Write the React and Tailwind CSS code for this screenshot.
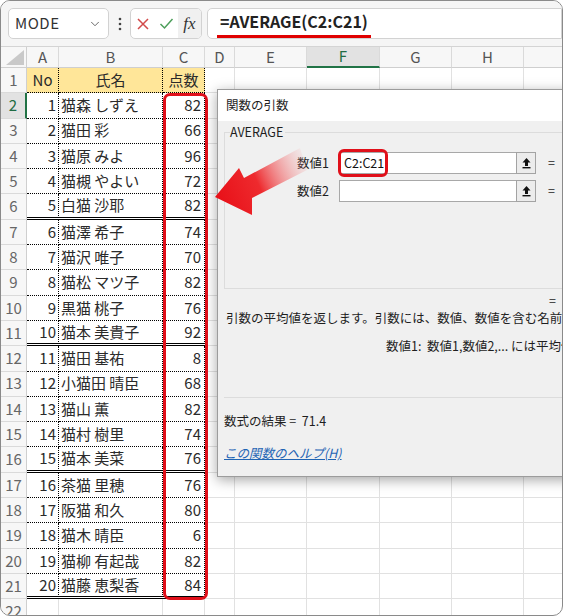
import { ChevronDown } from "lucide-react";

const ROWS = [
  [1, "猫森 しずえ", 82],
  [2, "猫田 彩", 66],
  [3, "猫原 みよ", 96],
  [4, "猫槻 やよい", 72],
  [5, "白猫 沙耶", 82],
  [6, "猫澤 希子", 74],
  [7, "猫沢 唯子", 70],
  [8, "猫松 マツ子", 82],
  [9, "黒猫 桃子", 76],
  [10, "猫本 美貴子", 92],
  [11, "猫田 基祐", 8],
  [12, "小猫田 晴臣", 68],
  [13, "猫山 薫", 82],
  [14, "猫村 樹里", 74],
  [15, "猫本 美菜", 76],
  [16, "茶猫 里穂", 76],
  [17, "阪猫 和久", 80],
  [18, "猫木 晴臣", 6],
  [19, "猫柳 有起哉", 82],
  [20, "猫藤 恵梨香", 84],
];

// widths of D..I
const EMPTY_COLS = [30, 72, 73, 72, 72, 80];
const HEADERS = [
  ["A", 32],
  ["B", 104],
  ["C", 42],
  ["D", 30],
  ["E", 72],
  ["F", 73],
  ["G", 72],
  ["H", 72],
  ["I", 80],
];

function EmptyCells() {
  return EMPTY_COLS.map((w, i) => (
    <div
      key={i}
      className="h-full flex-none border-r border-b border-[#e1e1e1]"
      style={{ width: w }}
    />
  ));
}

function RowHeader({ n, active }) {
  return (
    <div
      className={
        "h-full w-[26px] flex-none flex items-center justify-center text-[15px] border-b border-[#dadada] " +
        (active
          ? "bg-[#e2e2e2] text-[#1f6b43] border-r-2 border-r-[#217346]"
          : "bg-[#f7f7f7] text-[#666] border-r border-r-[#cfcfcf]")
      }
    >
      {n}
    </div>
  );
}

function DataRow({ n, no, name, score, head, double }) {
  const bottom = double
    ? "border-b-[3px] [border-bottom-style:double]"
    : "border-b [border-bottom-style:dotted]";
  const cell = `h-full flex-none flex items-center border-r [border-right-style:dotted] border-black ${bottom} ${
    head ? "bg-[#ffe699]" : ""
  }`;
  return (
    <div className="flex h-[25.3px]">
      <RowHeader n={n} active={n === 2} />
      <div className={`${cell} w-[32px] ${head ? "justify-center" : "justify-end pr-[2px]"}`}>{no}</div>
      <div className={`${cell} w-[104px] ${head ? "justify-center" : "pl-[2px]"} whitespace-nowrap`}>{name}</div>
      <div className={`${cell} w-[42px] ${head ? "justify-center" : "justify-end pr-[3px]"}`}>{score}</div>
      <EmptyCells />
    </div>
  );
}

function RefButton() {
  return (
    <div className="w-[20px] h-full flex-none bg-[#ececec] border border-[#a3a3a3] flex items-center justify-center">
      <svg width="11" height="12" viewBox="0 0 11 12">
        <path d="M5.5 1 L9.5 5.5 H7 V9 H4 V5.5 H1.5 Z" fill="#111" />
        <rect x="1.5" y="10" width="8" height="1.4" fill="#111" />
      </svg>
    </div>
  );
}

function ArgRow({ label, value, mt }) {
  return (
    <div className={`flex items-center h-[22px] ${mt}`}>
      <div className="w-[104px] text-right">{label}</div>
      <div className="ml-[10px] w-[177px] h-full bg-white border border-[#a8a8a8] border-r-0 flex items-center pl-[4px] text-[12.5px] text-[#111]">
        {value && (
          <span className="relative">
            {value}
            <span className="absolute -left-[6px] -right-[4px] -top-[5px] -bottom-[5px] border-[3px] border-[#e0101a] rounded-[6px]" />
          </span>
        )}
      </div>
      <RefButton />
      <div className="ml-[12px]">=</div>
    </div>
  );
}

function Dialog() {
  return (
    <div className="absolute left-[216px] top-[88px] w-[360px] h-[388px] flex flex-col border border-[#9c9c9c] bg-[#f0f0f0] shadow-[0_3px_12px_rgba(0,0,0,0.35)] text-[12.5px] text-[#1e1e1e]">
      <div className="h-[31px] flex-none bg-white flex items-center pl-[8px]">関数の引数</div>
      <div className="flex-1 px-[6px] pt-[11px]">
        <div className="relative h-[157px] border border-[#dcdcdc]">
          <div className="absolute left-[5px] -top-[8px] leading-[14px] bg-[#f0f0f0] pr-[2px]">AVERAGE</div>
          <ArgRow label="数値1" value="C2:C21" mt="mt-[19px]" />
          <ArgRow label="数値2" mt="mt-[6px]" />
        </div>
        <div className="mt-[6px] h-[12px] leading-[12px] pl-[325px]">=</div>
        <div className="mt-[4px] h-[14px] leading-[14px] pl-[2px] whitespace-nowrap">
          引数の平均値を返します。引数には、数値、数値を含む名前、配列、セル参照を指定できます。
        </div>
        <div className="mt-[14px] h-[14px] leading-[14px] pl-[162px] whitespace-pre">
          数値1:  数値1,数値2,... には平均値を求めたい数値を指定します。
        </div>
        <div className="mt-[44px] border-t border-[#dcdcdc]" />
        <div className="mt-[17px] h-[12px] leading-[12px] whitespace-pre">数式の結果 =  71.4</div>
        <div className="mt-[20px] h-[14px] leading-[12px]">
          <span className="text-[#1f64b4] underline italic">この関数のヘルプ(H)</span>
        </div>
      </div>
    </div>
  );
}

function Arrow() {
  return (
    <svg
      className="absolute left-0 top-0 pointer-events-none"
      width="563"
      height="616"
      viewBox="0 0 563 616"
    >
      <defs>
        <linearGradient id="arrowFade" x1="215" y1="196" x2="304" y2="156" gradientUnits="userSpaceOnUse">
          <stop offset="0" stopColor="#e81018" />
          <stop offset="0.45" stopColor="#ee2a2e" />
          <stop offset="1" stopColor="#f4a0a0" stopOpacity="0.1" />
        </linearGradient>
      </defs>
      <polygon
        points="214,196 238,167 243,177 299,147 306,169 251,197 251,214"
        fill="url(#arrowFade)"
      />
    </svg>
  );
}

export default function App() {
  return (
    <div className="relative w-[563px] h-[616px] overflow-hidden bg-white rounded-[10px] border border-[#8a8a8a] font-['Noto_Sans_CJK_JP',sans-serif] text-[#333]">
      {/* formula bar */}
      <div className="h-[46px] flex items-center bg-[#f5f5f5] border-b border-[#d4d4d4]">
        <div className="ml-[7px] w-[101px] h-[31px] bg-white border border-[#d2d2d2] rounded-[5px] flex items-center pl-[6px] pr-[6px] text-[15px] text-[#333]">
          <span className="flex-1 tracking-[0.5px]">MODE</span>
          <ChevronDown size={14} strokeWidth={1.5} color="#555" />
        </div>
        <svg className="ml-[9px]" width="4" height="14" viewBox="0 0 4 14">
          <circle cx="2" cy="2" r="1.3" fill="#444" />
          <circle cx="2" cy="7" r="1.3" fill="#444" />
          <circle cx="2" cy="12" r="1.3" fill="#444" />
        </svg>
        <div className="ml-[8px] w-[72px] h-[31px] bg-white border border-[#d2d2d2] rounded-[5px] flex items-center overflow-hidden">
          <svg className="ml-[5px]" width="14" height="14" viewBox="0 0 14 14">
            <path d="M2 2 L12 12 M12 2 L2 12" stroke="#d24b4b" strokeWidth="1.5" fill="none" />
          </svg>
          <svg className="ml-[9px]" width="15" height="13" viewBox="0 0 15 13">
            <path d="M1.5 7 L5.5 11 L13.5 2" stroke="#4c9e5a" strokeWidth="1.5" fill="none" />
          </svg>
          <div className="ml-[4px] h-full flex-1 bg-[#f0f0f0] flex items-center justify-center font-['Liberation_Serif',serif] italic text-[17px] text-[#333]">
            fx
          </div>
        </div>
        <div className="ml-[5px] flex-1 h-[31px] bg-white border border-[#d2d2d2] rounded-l-[5px] pl-[9px]">
          <span className="inline-block mt-[2px] px-[3px] leading-[20px] pb-[4px] border-b-[3px] border-[#e00000] text-[16px] font-semibold text-[#222]">
            =AVERAGE(C2:C21)
          </span>
        </div>
      </div>

      {/* column headers */}
      <div className="flex h-[21px] bg-[#f7f7f7]">
        <div className="w-[26px] flex-none h-full border-r border-b border-[#cfcfcf] flex items-end justify-end p-[2px]">
          <svg width="18" height="15" viewBox="0 0 18 15">
            <polygon points="18,0 18,15 0,15" fill="#c9c9c9" />
          </svg>
        </div>
        {HEADERS.map(([l, w]) => (
          <div
            key={l}
            style={{ width: w }}
            className={
              "flex-none h-full flex items-center justify-center text-[15px] border-r border-[#dadada] " +
              (l === "F"
                ? "bg-[#e2e2e2] text-[#1f6b43] border-b-2 border-b-[#217346]"
                : "text-[#555] border-b border-b-[#cfcfcf]")
            }
          >
            {l}
          </div>
        ))}
      </div>

      {/* grid */}
      <div className="text-[15px] text-[#2a2a2a]">
        <DataRow n={1} no="No" name="氏名" score="点数" head />
        {ROWS.map(([no, name, score], i) => (
          <DataRow
            key={no}
            n={i + 2}
            no={no}
            name={name}
            score={score}
            double={no % 5 === 0}
          />
        ))}
        <div className="flex h-[25.3px]">
          <RowHeader n={22} />
          {[32, 104, 42].map((w, i) => (
            <div key={i} style={{ width: w }} className="h-full flex-none border-r border-b border-[#e1e1e1]" />
          ))}
          <EmptyCells />
        </div>
      </div>

      {/* highlight on column C */}
      <div className="absolute left-[162px] top-[92px] w-[45px] h-[507px] border-[3px] border-[#e0101a] rounded-[7px]" />

      <Dialog />
      <Arrow />
    </div>
  );
}
